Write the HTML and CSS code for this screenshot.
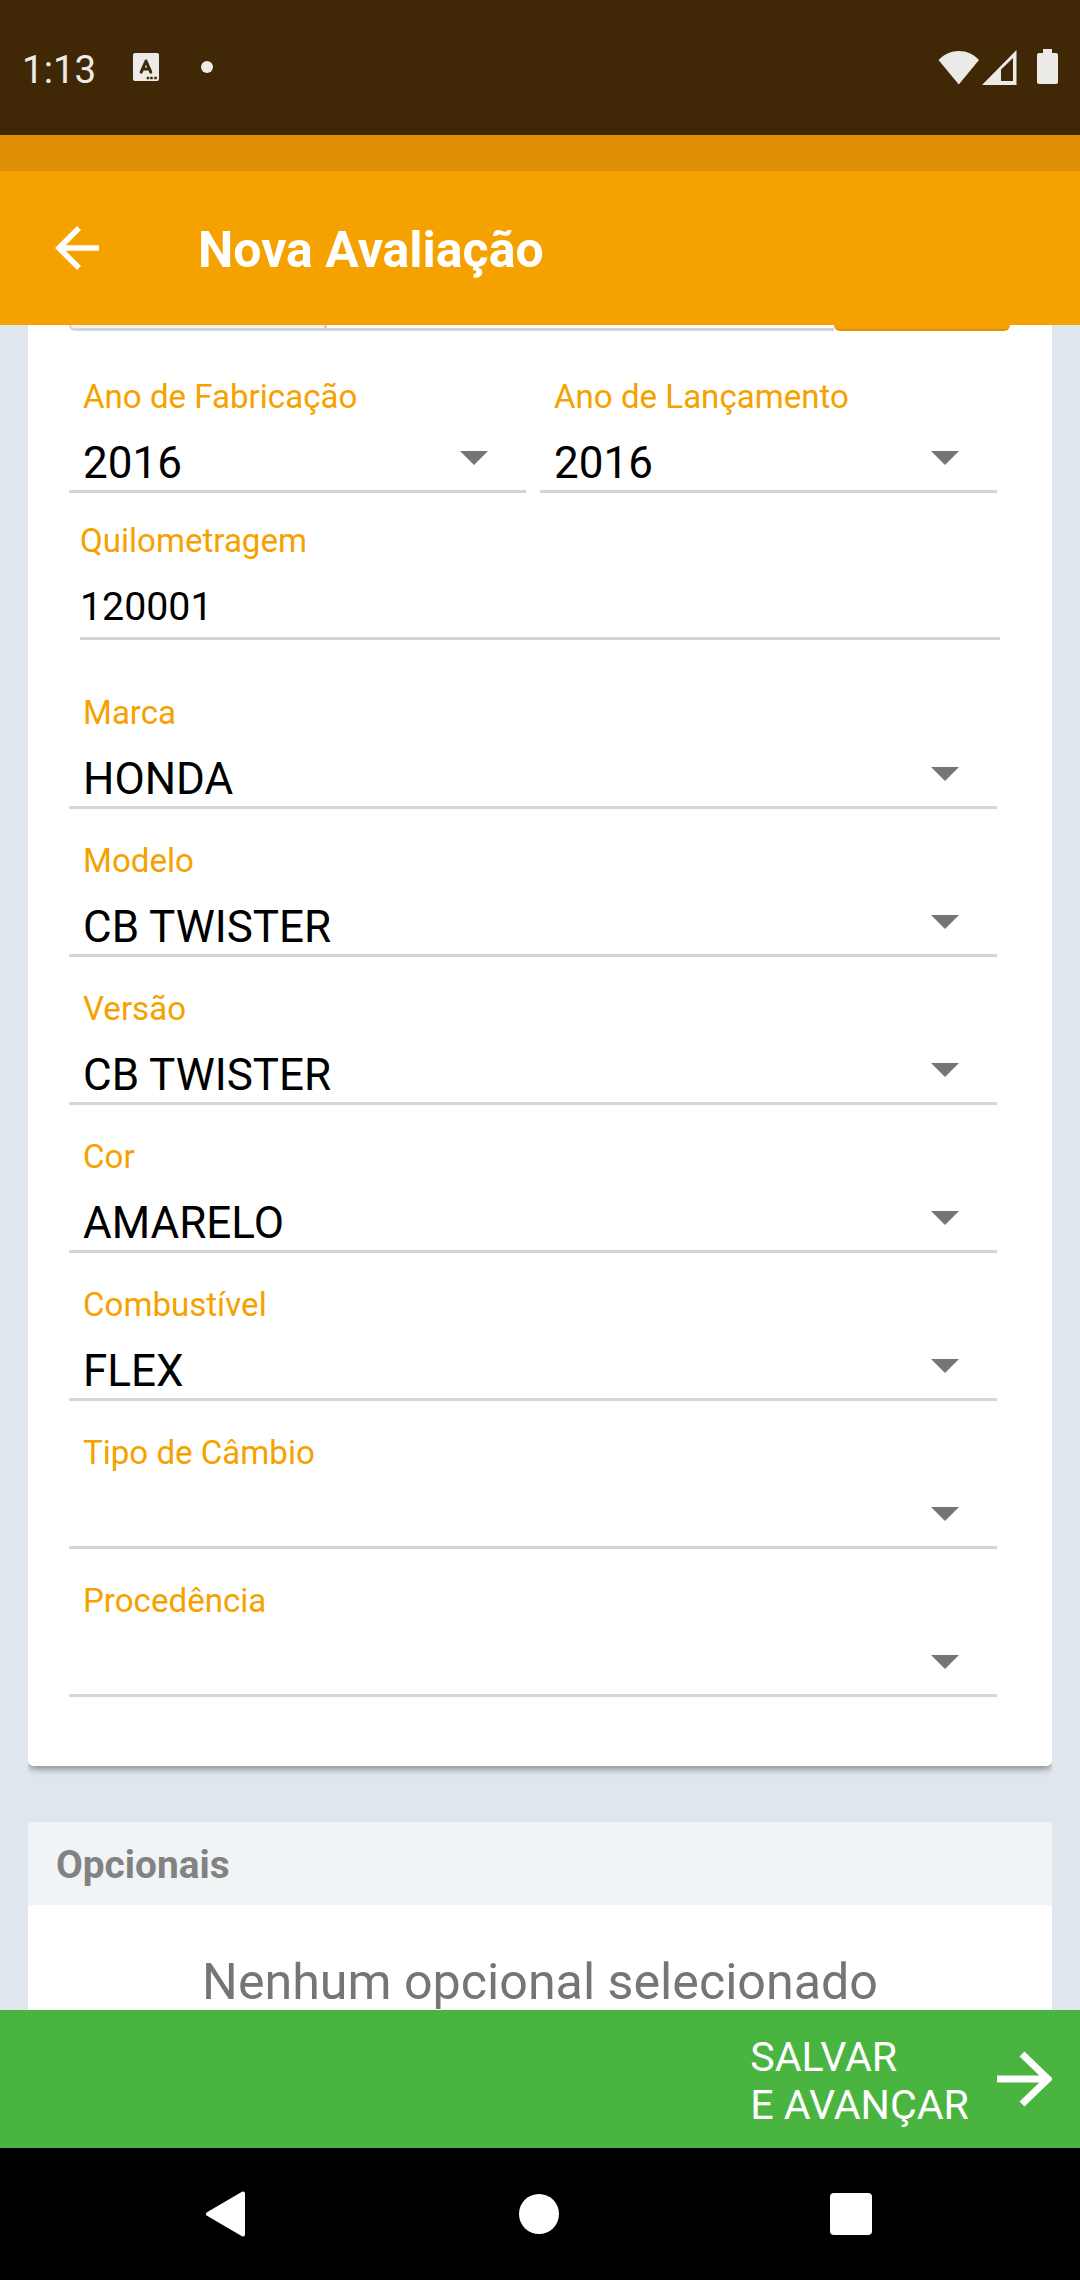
FILE: index.html
```html
<!DOCTYPE html>
<html lang="pt-BR">
<head>
<meta charset="utf-8">
<title>Nova Avaliação</title>
<link rel="stylesheet" href="styles.css">
</head>
<body>
<div class="screen">
  <div class="status">
    <span class="clock">1:13</span>
    <svg class="st-a" width="26" height="28" viewBox="0 0 26 28"><rect width="26" height="28" rx="2" fill="#ecebe7"/><path d="M8.2 19.200 13 8l4.800 11.200M9.800 16h6.400" fill="none" stroke="#402706" stroke-width="3" stroke-linecap="round" stroke-linejoin="round"/><path d="M14 24h2v2h-2zM17.500 24h2v2h-2zM21.500 24h2v2h-2z" fill="#402706" stroke="#402706" stroke-width=".5"/></svg>
    <span class="dot"></span>
    <svg class="st-wifi" width="42" height="36" viewBox="0 0 42 36"><path d="M.5 11C12-1 30-1 41 11L20.800 35.500z" fill="#ecebe7"/></svg>
    <svg class="st-cell" width="35" height="35" viewBox="0 0 35 35"><path fill-rule="evenodd" d="M0 35 34.500 0v35zM19 19.500V31h12V8z" fill="#ecebe7"/></svg>
    <svg class="st-bat" width="21" height="36" viewBox="0 0 21 36"><path d="M6 0h9v4h4q2 0 2 2v27q0 2-2 2H2q-2 0-2-2V6q0-2 2-2h4z" fill="#ecebe7"/></svg>
  </div>
  <div class="strip"></div>
  <header class="appbar">
    <svg width="44" height="44" viewBox="0 0 44 44"><path d="M44 22H5M24 2 4 22l20 20" fill="none" stroke="#fff" stroke-width="5.600"/></svg>
    <h1>Nova Avaliação</h1>
  </header>
  <main class="content">
    <section class="card form">
      <div class="plate"><span class="prefix"></span><span class="entry"></span><span class="search"></span></div>
      <div class="pair">
        <div class="field"><label>Ano de Fabricação</label><div class="value"><span>2016</span><i class="caret"></i></div></div>
        <div class="field"><label>Ano de Lançamento</label><div class="value"><span>2016</span><i class="caret"></i></div></div>
      </div>
      <div class="km"><label>Quilometragem</label><div class="km-value">120001</div></div>
      <div class="field"><label>Marca</label><div class="value"><span>HONDA</span><i class="caret"></i></div></div>
      <div class="field"><label>Modelo</label><div class="value"><span>CB TWISTER</span><i class="caret"></i></div></div>
      <div class="field"><label>Versão</label><div class="value"><span>CB TWISTER</span><i class="caret"></i></div></div>
      <div class="field"><label>Cor</label><div class="value"><span>AMARELO</span><i class="caret"></i></div></div>
      <div class="field"><label>Combustível</label><div class="value"><span>FLEX</span><i class="caret"></i></div></div>
      <div class="field"><label>Tipo de Câmbio</label><div class="value"><span></span><i class="caret"></i></div></div>
      <div class="field"><label>Procedência</label><div class="value"><span></span><i class="caret"></i></div></div>
    </section>
    <section class="card options">
      <h2>Opcionais</h2>
      <p>Nenhum opcional selecionado</p>
    </section>
  </main>
  <div class="save">
    <span>SALVAR<br>E AVANÇAR</span>
    <svg width="55" height="56" viewBox="0 0 55 56"><path d="M0 28h50M25 3l26 25-26 25" fill="none" stroke="#fff" stroke-width="7"/></svg>
  </div>
  <nav class="nav">
    <svg width="39" height="46" viewBox="0 0 39 46"><path d="M2 23 37 2.500v41z" fill="#fff" stroke="#fff" stroke-width="4" stroke-linejoin="round"/></svg>
    <span class="home"></span>
    <span class="recent"></span>
  </nav>
</div>
</body>
</html>
```
FILE: styles.css
```css
* { box-sizing: border-box; }
body { margin: 0; font-family: Roboto, "Liberation Sans", sans-serif; }
h1, h2, p { margin: 0; }
svg { display: block; flex: none; }
.screen { width: 1080px; height: 2280px; display: flex; flex-direction: column; overflow: hidden; }

.status { height: 135px; flex: none; background: #402706; display: flex; align-items: flex-start; padding: 49px 22px 0 22px; }
.clock { width: 111px; padding-top: 1px; color: #ecebe7; font-size: 38.5px; line-height: 40px; white-space: nowrap; }
.st-a { margin-top: 4px; }
.dot { width: 12px; height: 12px; margin: 12px 0 0 42px; border-radius: 50%; background: #ecebe7; }
.st-wifi { margin: 0 2px 0 auto; }
.st-cell { margin-top: 1px; margin-right: 20px; }

.strip { height: 36px; flex: none; background: #df9007; }
.appbar { height: 154px; flex: none; background: #f5a100; display: flex; align-items: center; padding-left: 55px; }
.appbar h1 { margin: 4px 0 0 99px; color: #fff; font-size: 50px; line-height: 60px; font-weight: 700; white-space: nowrap; }

.content { height: 1685px; flex: none; overflow: hidden; background: #dfe6ed; padding: 0 28px; }
.card { background: #fff; }
.form { height: 1441px; padding: 0 55px 0 41px; border-radius: 0 0 5px 5px; box-shadow: 0 4px 7px -1px rgba(60, 65, 65, .55); clip-path: inset(0 0 -16px 0); }
.plate { width: 941px; height: 6px; margin-bottom: 14px; display: flex; }
.prefix { width: 258px; border: solid #d5d5d5; border-width: 0 3px 3px 2px; border-bottom-left-radius: 6px; background: #f0f4f7; }
.entry { flex: 1; border-bottom: 3px solid #d5d5d5; }
.search { width: 176px; background: #f5a100; border-bottom: 2px solid #e39206; border-radius: 0 0 9px 9px; }
.pair { display: grid; grid-template-columns: 457px 457px; gap: 14px; }

label { display: block; color: #f5a100; font-size: 33.1px; line-height: 40px; white-space: nowrap; }
.field { height: 148px; padding-top: 32px; display: flex; flex-direction: column; justify-content: space-between; border-bottom: 3px solid #d5d5d5; }
.field label { padding-left: 14px; }
.value { height: 62px; display: flex; justify-content: space-between; padding: 9px 38px 0 14px; color: #000; font-size: 44px; line-height: 52px; white-space: nowrap; }
.caret { width: 28px; height: 14px; margin-top: 14px; background: #757575; clip-path: polygon(0 0, 100% 0, 50% 100%); }
.km { width: 920px; height: 147px; margin: 0 0 21px 11px; padding-top: 28px; border-bottom: 3px solid #d5d5d5; }
.km-value { margin-top: 22px; font-size: 39.3px; line-height: 48px; }

.options { height: 240px; margin-top: 56px; border-radius: 5px 5px 0 0; overflow: hidden; }
.options h2 { height: 83px; padding: 1px 0 0 28px; background: #f0f4f7; color: #828282; font-size: 38.8px; line-height: 83px; font-weight: 700; }
.options p { margin-top: 47px; color: #757575; font-size: 50.2px; line-height: 60px; text-align: center; white-space: nowrap; }

.save { height: 138px; flex: none; background: #49b43f; display: flex; justify-content: flex-end; align-items: center; gap: 28px; padding-right: 28px; color: #fff; font-size: 41.2px; line-height: 48px; white-space: nowrap; }
.save span { padding-top: 4px; }
.nav { flex: 1; background: #000; display: flex; align-items: center; justify-content: space-between; padding: 0 208px 0 206px; }
.home { width: 40px; height: 40px; margin-left: 3px; border-radius: 50%; background: #fff; }
.recent { width: 42px; height: 42px; border-radius: 4px; background: #fff; }
```
